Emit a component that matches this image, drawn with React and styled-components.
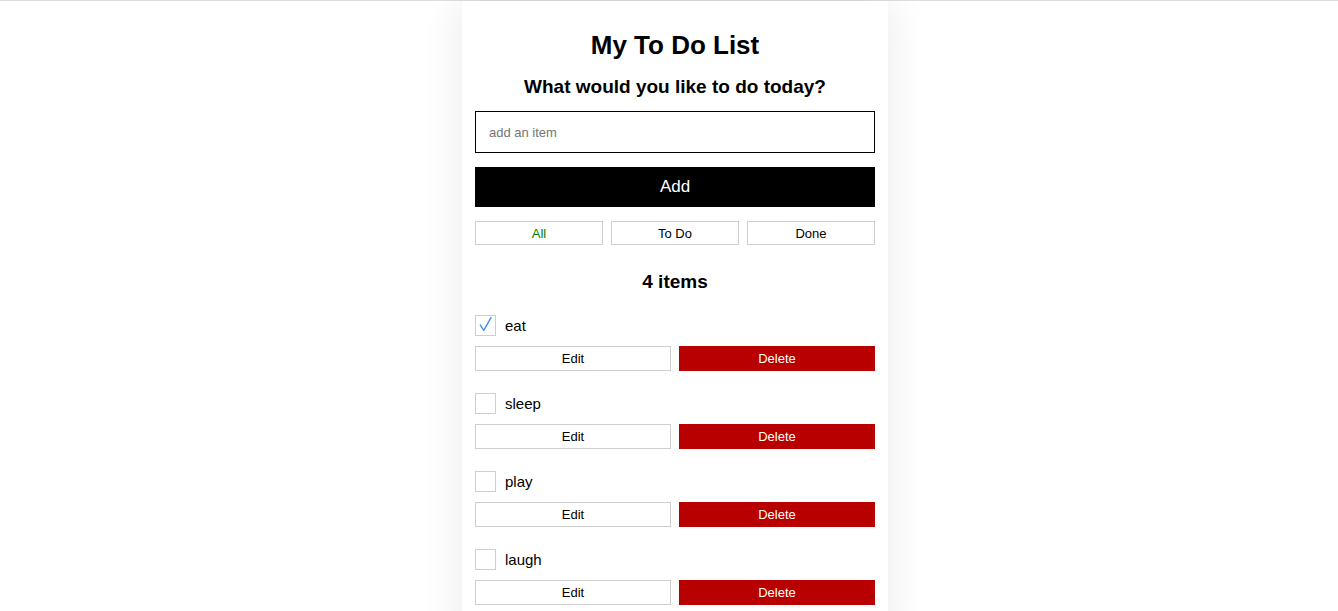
import React, { useState } from "react";
import styled, { createGlobalStyle } from "styled-components";

const Global = createGlobalStyle`
  html, body { margin: 0; padding: 0; background: #fff; }
  body { font-family: "Liberation Sans", Arial, sans-serif; color: #000; overflow: hidden; }
`;

const Page = styled.div`
  border-top: 1px solid #dedede;
  display: flex;
  justify-content: center;
  padding-left: 12px;
  min-height: 610px;
`;

const Card = styled.main`
  width: 400px;
  padding: 29px 13px 40px;
  background: #fff;
  box-shadow: 0 0 40px rgba(0, 0, 0, 0.09);
  display: flex;
  flex-direction: column;
`;

const Title = styled.h1`
  margin: 0;
  font-size: 26px;
  line-height: 30px;
  font-weight: 700;
  text-align: center;
`;

const Subtitle = styled.h2`
  margin: 16px 0 0;
  font-size: 19px;
  line-height: 22px;
  font-weight: 700;
  text-align: center;
`;

const Input = styled.input`
  margin-top: 13px;
  height: 42px;
  box-sizing: border-box;
  border: 1px solid #000;
  padding: 0 13px;
  font-family: "Liberation Sans", Arial, sans-serif;
  font-size: 13px;
  outline: none;
  &::placeholder { color: #757575; }
`;

const AddButton = styled.button`
  margin-top: 14px;
  height: 40px;
  border: none;
  background: #000;
  color: #fff;
  font-family: "Liberation Sans", Arial, sans-serif;
  font-size: 17px;
  cursor: pointer;
`;

const FilterRow = styled.div`
  margin-top: 14px;
  display: grid;
  grid-template-columns: repeat(3, 1fr);
  gap: 8px;
`;

const FilterButton = styled.button`
  height: 24px;
  box-sizing: border-box;
  border: 1px solid #cfcfcf;
  background: #fff;
  color: ${(p) => (p.$active ? "#008000" : "#000")};
  font-family: "Liberation Sans", Arial, sans-serif;
  font-size: 13px;
  padding: 0;
  cursor: pointer;
`;

const Count = styled.h2`
  margin: 26px 0 0;
  font-size: 19px;
  line-height: 22px;
  font-weight: 700;
  text-align: center;
`;

const List = styled.ul`
  list-style: none;
  margin: 21px 0 0;
  padding: 0;
  display: flex;
  flex-direction: column;
  gap: 21px;
`;

const Item = styled.li`
  display: flex;
  flex-direction: column;
  gap: 10px;
`;

const ItemHead = styled.label`
  display: flex;
  align-items: center;
  gap: 9px;
  height: 22px;
  font-size: 15px;
  cursor: pointer;
`;

const Box = styled.span`
  width: 21px;
  height: 21px;
  box-sizing: border-box;
  border: 1px solid #cfcfcf;
  background: #fff;
  display: flex;
  align-items: center;
  justify-content: center;
  flex: none;
`;

const ItemActions = styled.div`
  display: grid;
  grid-template-columns: 1fr 1fr;
  gap: 8px;
`;

const ActionButton = styled.button`
  height: 25px;
  box-sizing: border-box;
  border: 1px solid ${(p) => (p.$danger ? "#b80000" : "#cfcfcf")};
  background: ${(p) => (p.$danger ? "#b80000" : "#fff")};
  color: ${(p) => (p.$danger ? "#fff" : "#000")};
  font-family: "Liberation Sans", Arial, sans-serif;
  font-size: 13px;
  padding: 0;
  cursor: pointer;
`;

const Check = () => (
  <svg width="21" height="21" viewBox="0 0 21 21" style={{ marginLeft: -1, marginTop: -1 }}>
    <path d="M5.5 11 L9.2 16.6 L16.8 3.2" fill="none" stroke="#3d8ef0" strokeWidth="1.4" strokeLinecap="round" strokeLinejoin="round" />
  </svg>
);

export default function App() {
  const [items] = useState([
    { name: "eat", done: true },
    { name: "sleep", done: false },
    { name: "play", done: false },
    { name: "laugh", done: false },
  ]);
  return (
    <>
      <Global />
      <Page>
        <Card>
          <Title>My To Do List</Title>
          <Subtitle>What would you like to do today?</Subtitle>
          <Input placeholder="add an item" />
          <AddButton>Add</AddButton>
          <FilterRow>
            <FilterButton $active>All</FilterButton>
            <FilterButton>To Do</FilterButton>
            <FilterButton>Done</FilterButton>
          </FilterRow>
          <Count>{items.length} items</Count>
          <List>
            {items.map((it) => (
              <Item key={it.name}>
                <ItemHead>
                  <Box>{it.done && <Check />}</Box>
                  {it.name}
                </ItemHead>
                <ItemActions>
                  <ActionButton>Edit</ActionButton>
                  <ActionButton $danger>Delete</ActionButton>
                </ItemActions>
              </Item>
            ))}
          </List>
        </Card>
      </Page>
    </>
  );
}
